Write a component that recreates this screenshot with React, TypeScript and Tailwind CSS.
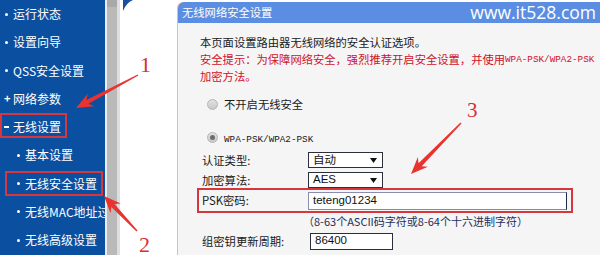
import React from "react";

function arrowPts(tx: number, ty: number, px: number, py: number): string {
  const dx = px - tx;
  const dy = py - ty;
  const len = Math.hypot(dx, dy);
  const ux = dx / len;
  const uy = dy / len;
  const nx = -uy;
  const ny = ux;
  const L = 17;
  const H = 7;
  const bx = px - ux * L;
  const by = py - uy * L;
  const nbx = px - ux * (L - 4);
  const nby = py - uy * (L - 4);
  const w0 = 0.7;
  const w1 = 2.2;
  const pts: number[][] = [
    [tx + nx * w0, ty + ny * w0],
    [nbx + nx * w1, nby + ny * w1],
    [bx + nx * H, by + ny * H],
    [px, py],
    [bx - nx * H, by - ny * H],
    [nbx - nx * w1, nby - ny * w1],
    [tx - nx * w0, ty - ny * w0],
  ];
  return pts.map((p) => p.map((v) => v.toFixed(1)).join(",")).join(" ");
}

const cjk = "font-['SimSun','Noto_Sans_CJK_SC',sans-serif]";

function SideItem({
  label,
  mark,
  sub,
}: {
  label: string;
  mark: "dot" | "plus" | "minus";
  sub?: boolean;
}) {
  return (
    <div
      className={`h-[28.25px] flex items-center whitespace-nowrap ${
        sub ? "pl-[16px]" : "pl-[4px]"
      }`}
    >
      <span className="w-[9px] shrink-0 flex items-center">
        {mark === "dot" && (
          <span className="block w-[3px] h-[3px] rounded-full bg-white ml-[1px]" />
        )}
        {mark === "plus" && (
          <span className="text-[11px] leading-none font-bold">+</span>
        )}
        {mark === "minus" && (
          <span className="block w-[5px] h-[2px] bg-white" />
        )}
      </span>
      <span className="text-[12px] leading-none shrink-0">{label}</span>
    </div>
  );
}

function Radio({ checked }: { checked?: boolean }) {
  return (
    <span className="w-[11px] h-[11px] rounded-full border border-[#b5b5b5] bg-gradient-to-b from-[#e2e2e2] to-[#c9c9c9] flex items-center justify-center">
      {checked && <span className="w-[5px] h-[5px] rounded-full bg-[#6d6d6d]" />}
    </span>
  );
}

function Select({ value, latin }: { value: string; latin?: boolean }) {
  return (
    <div className="w-[75px] h-[16px] border border-[#2a2f3a] bg-white flex items-center justify-between pl-[4px] pr-[5px]">
      <span
        className={`text-[11.5px] leading-none text-[#111] ${
          latin ? "font-['Liberation_Sans',sans-serif]" : ""
        }`}
      >
        {value}
      </span>
      <svg width="7" height="5" viewBox="0 0 7 5">
        <path d="M0 0 H7 L3.5 5 Z" fill="#111" />
      </svg>
    </div>
  );
}

export default function App() {
  return (
    <div
      className={`relative w-[600px] h-[255px] overflow-hidden bg-white flex ${cjk}`}
    >
      {/* sidebar */}
      <aside className="w-[105px] shrink-0 bg-[#0b4fa0] text-white overflow-hidden flex flex-col">
        <SideItem label="运行状态" mark="dot" />
        <SideItem label="设置向导" mark="dot" />
        <SideItem label="QSS安全设置" mark="dot" />
        <SideItem label="网络参数" mark="plus" />
        <SideItem label="无线设置" mark="minus" />
        <SideItem label="基本设置" mark="dot" sub />
        <SideItem label="无线安全设置" mark="dot" sub />
        <SideItem label="无线MAC地址过滤" mark="dot" sub />
        <SideItem label="无线高级设置" mark="dot" sub />
      </aside>
      {/* scrollbar */}
      <div className="w-[2px] shrink-0 bg-[#ececec]" />
      <div className="w-[10px] shrink-0 bg-[#b9b9b9] flex flex-col">
        <div className="h-[7px] bg-[#a9a9a9]" />
      </div>
      <div className="w-[3px] shrink-0 bg-[#dedede]" />
      {/* white gap with frame corner */}
      <div className="w-[57px] shrink-0 bg-white">
        <svg width="12" height="12" viewBox="0 0 12 12" className="ml-[3px]">
          <path d="M0 0 H10 Q3 3 0 11 Z" fill="#1a4f9c" />
        </svg>
      </div>
      {/* main panel */}
      <main className="flex-1 pt-[2px] bg-white">
        <div className="h-full border-l border-[#efbb8f] bg-[#f5f5f5] rounded-tl-[6px] flex flex-col">
          <div className="h-[21px] bg-[#5b8ee2] rounded-tl-[6px] flex items-center justify-between pl-[4px] pr-[4px] text-white">
            <span className="text-[11.3px] leading-none">无线网络安全设置</span>
            <span className="text-[17.5px] leading-none font-['Open_Sans','Liberation_Sans',sans-serif]">
              www.it528.com
            </span>
          </div>
          <div className="pt-[10px] text-[11.3px] text-[#1a1a1a]">
            <div className="h-[18px] flex items-center pl-[22px]">
              本页面设置路由器无线网络的安全认证选项。
            </div>
            <div className="h-[17px] flex items-center pl-[22px] text-[#d0112b] whitespace-nowrap">
              安全提示：为保障网络安全，强烈推荐开启安全设置，并使用
              <span className="font-['Liberation_Mono',monospace] text-[9.3px]">
                WPA-PSK/WPA2-PSK
              </span>
            </div>
            <div className="h-[17px] flex items-center pl-[22px] text-[#d0112b]">
              加密方法。
            </div>
            <div className="mt-[9px] h-[20px] flex items-center pl-[29px] gap-[6px]">
              <Radio />
              <span>不开启无线安全</span>
            </div>
            <div className="mt-[13px] h-[20px] flex items-center pl-[29px] gap-[6px]">
              <Radio checked />
              <span className="font-['Liberation_Mono',monospace] text-[9.3px] pt-[5px]">
                WPA-PSK/WPA2-PSK
              </span>
            </div>
            <div className="mt-[3px] h-[20px] flex items-center pl-[24px]">
              <span className="w-[106px]">认证类型:</span>
              <Select value="自动" />
            </div>
            <div className="h-[20px] flex items-center pl-[24px]">
              <span className="w-[106px]">加密算法:</span>
              <Select value="AES" latin />
            </div>
            <div className="mt-[-2px] ml-[19px] w-[376px] h-[25px] border-2 border-[#d8363d] flex items-center pl-[3px]">
              <span className="w-[106px]">PSK密码:</span>
              <div className="w-[259px] h-[18px] border border-t-[#8c8cae] border-l-[#8c8cae] border-r-[#1f2a44] border-b-[#8a86b0] bg-white flex items-center pl-[4px]">
                <span className="text-[11.5px] leading-none font-['Liberation_Sans',sans-serif] text-[#111]">
                  teteng01234
                </span>
              </div>
            </div>
            <div className="h-[17px] flex items-center pl-[125px] text-[11px] text-[#1f2d5c] whitespace-nowrap">
              （8-63个ASCII码字符或8-64个十六进制字符）
            </div>
            <div className="mt-[1px] h-[20px] flex items-center pl-[24px]">
              <span className="w-[108px]">组密钥更新周期:</span>
              <div className="w-[83px] h-[17px] border border-[#2a2f3a] bg-white flex items-center pl-[4px]">
                <span className="text-[11.5px] leading-none font-['Liberation_Sans',sans-serif] text-[#111]">
                  86400
                </span>
              </div>
            </div>
          </div>
        </div>
      </main>

      {/* highlight boxes over sidebar */}
      <div className="absolute left-0 top-[113px] w-[67px] h-[25px] border-2 border-[#d8363d]" />
      <div className="absolute left-[5px] top-[171px] w-[98px] h-[25px] border-2 border-[#d8363d]" />

      {/* arrows and numbers */}
      <svg
        className="absolute left-0 top-0 pointer-events-none"
        width="600"
        height="255"
        viewBox="0 0 600 255"
      >
        <polygon points={arrowPts(138, 75, 76, 108)} fill="#e8332f" />
        <polygon points={arrowPts(137, 231, 104, 196)} fill="#e8332f" />
        <polygon points={arrowPts(461, 123, 411, 174)} fill="#e8332f" />
      </svg>
      <span className="absolute left-[140px] top-[57px] text-[22px] leading-[16px] text-[#d62f38] font-['Liberation_Serif',serif]">
        1
      </span>
      <span className="absolute left-[139px] top-[237px] text-[22px] leading-[16px] text-[#d62f38] font-['Liberation_Serif',serif]">
        2
      </span>
      <span className="absolute left-[467px] top-[102px] text-[21px] leading-[16px] text-[#d62f38] font-['Liberation_Serif',serif]">
        3
      </span>
    </div>
  );
}
